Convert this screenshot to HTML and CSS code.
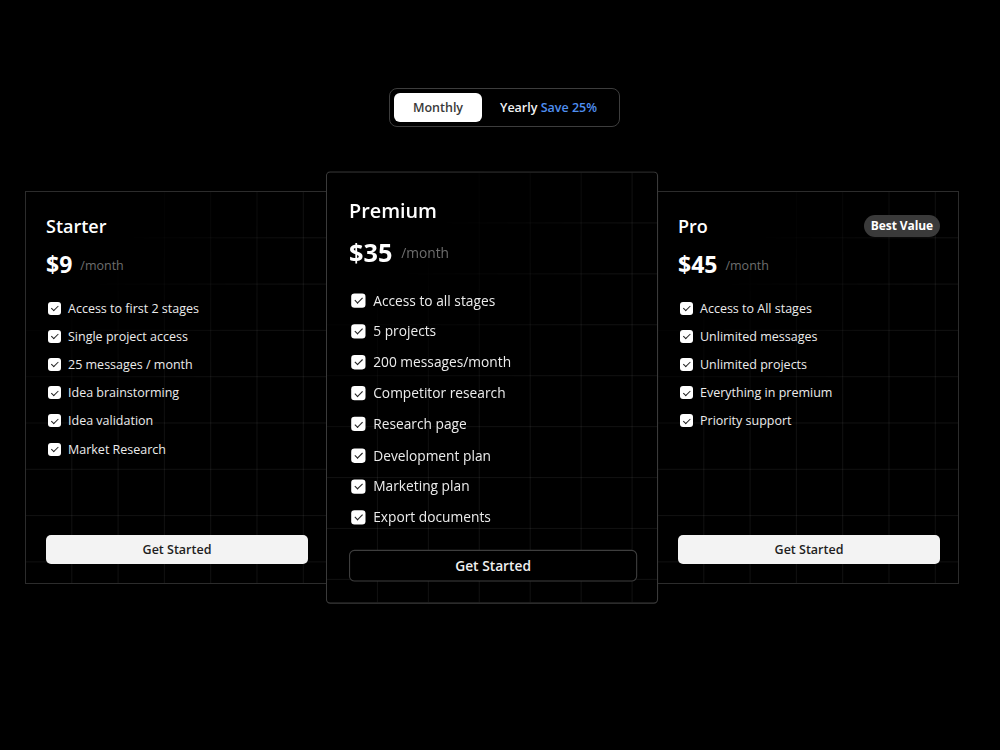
FILE: index.html
```html
<!DOCTYPE html>
<html lang="en">
<head>
    <meta charset="UTF-8">
    <meta name="viewport" content="width=device-width, initial-scale=1.0">
    <title>Pricing</title>
    <link rel="stylesheet" href="styles.css">
</head>
<body>
    <div class="pricing">
        <div class="toggle-row">
            <div class="toggle">
                <button class="toggle-btn active">Monthly</button>
                <button class="toggle-btn">Yearly <span class="save">Save 25%</span></button>
            </div>
        </div>

        <div class="plans">
            <div class="plan">
                <div class="plan-head">
                    <h3 class="plan-name">Starter</h3>
                </div>
                <div class="plan-price"><span class="amount">$9</span><span class="period">/month</span></div>
                <ul class="features">
                    <li><span class="check"></span>Access to first 2 stages</li>
                    <li><span class="check"></span>Single project access</li>
                    <li><span class="check"></span>25 messages / month</li>
                    <li><span class="check"></span>Idea brainstorming</li>
                    <li><span class="check"></span>Idea validation</li>
                    <li><span class="check"></span>Market Research</li>
                </ul>
                <button class="plan-btn">Get Started</button>
            </div>

            <div class="plan plan-featured">
                <div class="plan-head">
                    <h3 class="plan-name">Premium</h3>
                </div>
                <div class="plan-price"><span class="amount">$35</span><span class="period">/month</span></div>
                <ul class="features">
                    <li><span class="check"></span>Access to all stages</li>
                    <li><span class="check"></span>5 projects</li>
                    <li><span class="check"></span>200 messages/month</li>
                    <li><span class="check"></span>Competitor research</li>
                    <li><span class="check"></span>Research page</li>
                    <li><span class="check"></span>Development plan</li>
                    <li><span class="check"></span>Marketing plan</li>
                    <li><span class="check"></span>Export documents</li>
                </ul>
                <button class="plan-btn plan-btn-outline">Get Started</button>
            </div>

            <div class="plan">
                <div class="plan-head">
                    <h3 class="plan-name">Pro</h3>
                    <span class="badge">Best Value</span>
                </div>
                <div class="plan-price"><span class="amount">$45</span><span class="period">/month</span></div>
                <ul class="features">
                    <li><span class="check"></span>Access to All stages</li>
                    <li><span class="check"></span>Unlimited messages</li>
                    <li><span class="check"></span>Unlimited projects</li>
                    <li><span class="check"></span>Everything in premium</li>
                    <li><span class="check"></span>Priority support</li>
                </ul>
                <button class="plan-btn">Get Started</button>
            </div>
        </div>
    </div>
</body>
</html>
```

FILE: styles.css
```css
body {
    margin: 0;
    min-height: 100vh;
    background-color: #000;
    color: #fff;
    font-family: "Open Sans", "Noto Sans", sans-serif;
}
.pricing {
    padding: 88px 0 60px;
}
.toggle-row {
    display: flex;
    justify-content: center;
    padding-left: 9px;
}
.toggle {
    display: flex;
    align-items: center;
    gap: 4px;
    padding: 4px 22px 4px 4px;
    border: 1px solid #3d3d3d;
    border-radius: 8px;
    background: #000;
}
.toggle-btn {
    height: 29px;
    padding: 0 0 0 14px;
    border: none;
    border-radius: 6px;
    background: transparent;
    color: #f2f2f2;
    font-family: inherit;
    font-size: 12.5px;
    font-weight: 600;
    cursor: pointer;
}
.toggle-btn.active {
    width: 88px;
    padding: 0;
    background: #fff;
    color: #3a3a3a;
}
.save {
    color: #4f8ff0;
}
.plans {
    display: grid;
    grid-template-columns: repeat(3, 302px);
    gap: 14px;
    margin-top: 64px;
    padding-left: 25px;
}
.plan {
    position: relative;
    display: flex;
    flex-direction: column;
    padding: 20px 18px 19px 20px;
    border: 1px solid #2c2c2c;
    background-color: #000;
}
/* faint grid behind the card, faded out toward the top left corner */
.plan::before {
    content: "";
    position: absolute;
    inset: 0;
    background-image:
        linear-gradient(to right, transparent 45px, rgba(255, 255, 255, 0.065) 45px),
        linear-gradient(to bottom, transparent 45px, rgba(255, 255, 255, 0.065) 45px);
    background-size: 46.3px 46.3px;
    -webkit-mask-image: radial-gradient(circle at 0 0, transparent 110px, #000 280px);
    mask-image: radial-gradient(circle at 0 0, transparent 110px, #000 280px);
    pointer-events: none;
}
.plan > * {
    position: relative;
}
.plan-featured {
    z-index: 1;
    border-color: #3a3a3a;
    border-radius: 4px;
    transform: scale(1.1);
}
.plan-head {
    display: flex;
    align-items: center;
    justify-content: space-between;
    height: 28px;
}
.plan-name {
    margin: 0;
    font-size: 18px;
    font-weight: 600;
}
.badge {
    height: 22px;
    padding: 0 7px;
    border-radius: 11px;
    background: #3a3a3a;
    font-size: 12px;
    font-weight: 700;
    line-height: 22px;
    letter-spacing: -0.1px;
}
.plan-price {
    display: flex;
    align-items: center;
    gap: 8px;
    margin-top: 8px;
    height: 32px;
}
.amount {
    font-size: 23px;
    font-weight: 700;
}
.period {
    font-size: 12.5px;
    color: #6e6e6e;
    padding-top: 2px;
}
.features {
    list-style: none;
    margin: 14px 0 15px;
    padding: 0;
}
.features li {
    display: flex;
    align-items: center;
    gap: 7px;
    height: 28.2px;
    font-size: 12.5px;
    color: #ececec;
}
.check {
    width: 13px;
    height: 13px;
    margin-left: 2px;
    border-radius: 3px;
    background: #fff;
    flex-shrink: 0;
}
.check::after {
    content: "";
    display: block;
    margin: 2.5px 0 0 4.5px;
    width: 3px;
    height: 5.5px;
    border: solid #222;
    border-width: 0 1.5px 1.5px 0;
    transform: rotate(45deg);
}
.plan-btn {
    margin-top: auto;
    height: 29px;
    border: none;
    border-radius: 5px;
    background: #f3f3f3;
    color: #1e1e1e;
    font-family: inherit;
    font-size: 12.5px;
    font-weight: 600;
    cursor: pointer;
}
.plan-btn-outline {
    border: 1px solid #3e3e3e;
    background: #000;
    color: #f0f0f0;
}
```
